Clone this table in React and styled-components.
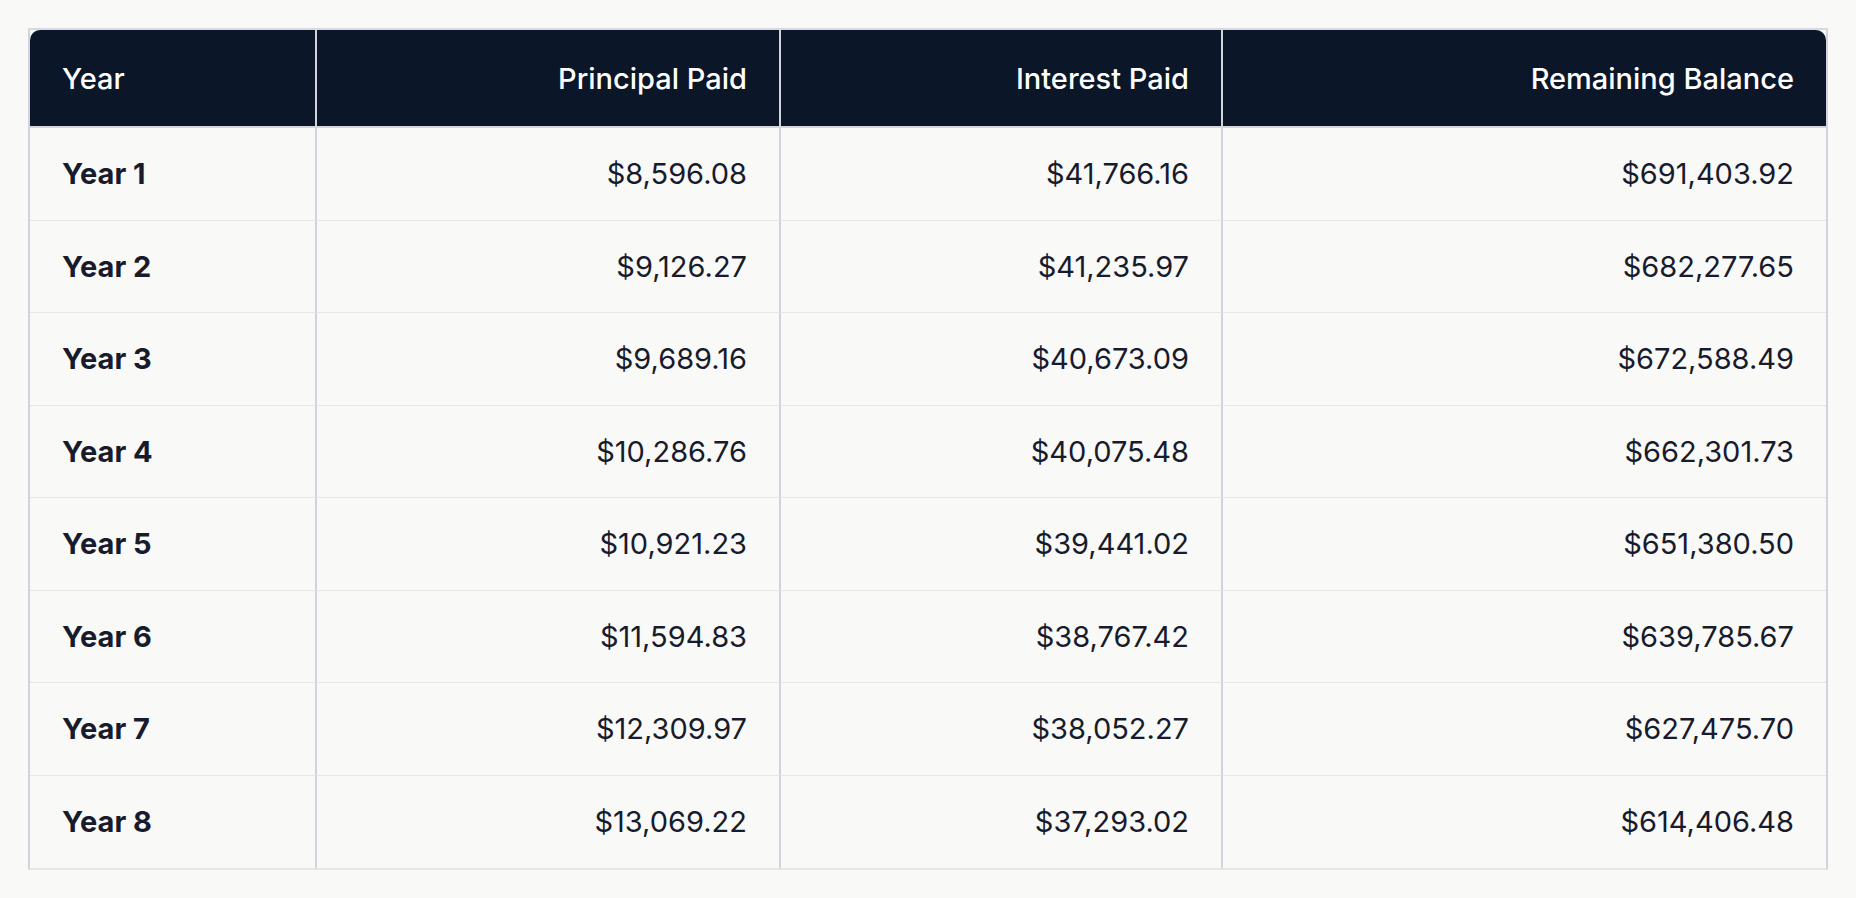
import React from 'react';
import styled, {createGlobalStyle} from 'styled-components';

const GlobalStyle = createGlobalStyle`
  html, body {
    margin: 0;
    padding: 0;
    background: #f9f9f8;
  }
  body {
    font-family: Inter, "Liberation Sans", sans-serif;
    color: #171b2c;
  }
`;

const Page = styled.div`
  padding: 28px;
`;

const Table = styled.table`
  width: 1800px;
  table-layout: fixed;
  border-spacing: 0;
  border-top: 2px solid #d7dae1;
  border-left: 2px solid #d0d4dc;
  border-right: 2px solid #d0d4dc;
  border-bottom: 2px solid #e6e6e6;
  font-size: 29px;
`;

const Col = styled.col`
  width: ${p => p.$w}px;
`;

const Th = styled.th`
  box-sizing: border-box;
  height: 98px;
  padding: 0 32px;
  background: #0b1628;
  color: #ffffff;
  font-weight: 500;
  text-align: ${p => (p.$left ? 'left' : 'right')};
  border-bottom: 2px solid #d4d7de;
  border-left: ${p => (p.$left ? 'none' : '2px solid #d0d4dc')};

  &:first-child {
    border-top-left-radius: 10px;
  }
  &:last-child {
    border-top-right-radius: 10px;
  }
`;

const Td = styled.td`
  box-sizing: border-box;
  height: 92.5px;
  padding: 0 32px;
  text-align: ${p => (p.$left ? 'left' : 'right')};
  font-weight: ${p => (p.$left ? 700 : 400)};
  border-left: ${p => (p.$left ? 'none' : '2px solid #d0d4dc')};
  border-bottom: ${p => (p.$last ? 'none' : '1.5px solid #e6e6e6')};
`;

const rows = [
  ['Year 1', '$8,596.08', '$41,766.16', '$691,403.92'],
  ['Year 2', '$9,126.27', '$41,235.97', '$682,277.65'],
  ['Year 3', '$9,689.16', '$40,673.09', '$672,588.49'],
  ['Year 4', '$10,286.76', '$40,075.48', '$662,301.73'],
  ['Year 5', '$10,921.23', '$39,441.02', '$651,380.50'],
  ['Year 6', '$11,594.83', '$38,767.42', '$639,785.67'],
  ['Year 7', '$12,309.97', '$38,052.27', '$627,475.70'],
  ['Year 8', '$13,069.22', '$37,293.02', '$614,406.48'],
];

export default function App() {
  return (
    <Page>
      <GlobalStyle />
      <Table>
        <colgroup>
          <Col $w={285} />
          <Col $w={464} />
          <Col $w={442} />
          <Col $w={605} />
        </colgroup>
        <thead>
          <tr>
            <Th $left>Year</Th>
            <Th>Principal Paid</Th>
            <Th>Interest Paid</Th>
            <Th>Remaining Balance</Th>
          </tr>
        </thead>
        <tbody>
          {rows.map((r, i) => (
            <tr key={r[0]}>
              {r.map((v, j) => (
                <Td key={j} $left={j === 0} $last={i === rows.length - 1}>
                  {v}
                </Td>
              ))}
            </tr>
          ))}
        </tbody>
      </Table>
    </Page>
  );
}
